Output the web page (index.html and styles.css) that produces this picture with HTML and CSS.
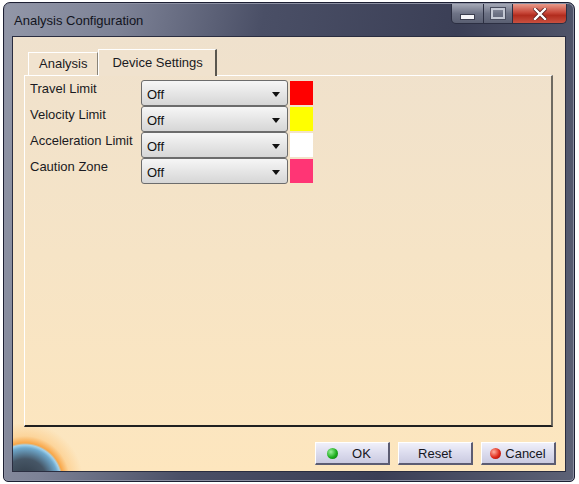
FILE: index.html
```html
<!DOCTYPE html>
<html lang="en">
<head>
    <meta charset="UTF-8">
    <meta name="viewport" content="width=device-width, initial-scale=1.0">
    <title>Analysis Configuration</title>
    <link rel="stylesheet" href="styles.css">
</head>
<body>
    <div class="window">
        <div class="titlebar">
            <span class="title">Analysis Configuration</span>
            <div class="caption-buttons">
                <div class="cap cap-min"><span class="min-bar"></span></div>
                <div class="cap cap-max"><span class="max-box"></span></div>
                <div class="cap cap-close">
                    <svg width="14" height="12" viewBox="0 0 14 12">
                        <path d="M2 1 L12 11 M12 1 L2 11" stroke="#5a2020" stroke-width="4" stroke-linecap="square"/>
                        <path d="M2 1 L12 11 M12 1 L2 11" stroke="#ffffff" stroke-width="2.4" stroke-linecap="square"/>
                    </svg>
                </div>
            </div>
        </div>
        <div class="client">
            <div class="tabs">
                <div class="tab">Analysis</div>
                <div class="tab active">Device Settings</div>
            </div>
            <div class="panel">
                <div class="settings">
                    <div class="label">Travel Limit</div>
                    <div class="combo"><span>Off</span><span class="arrow"></span></div>
                    <div class="swatch red"></div>

                    <div class="label">Velocity Limit</div>
                    <div class="combo"><span>Off</span><span class="arrow"></span></div>
                    <div class="swatch yellow"></div>

                    <div class="label">Acceleration Limit</div>
                    <div class="combo"><span>Off</span><span class="arrow"></span></div>
                    <div class="swatch white"></div>

                    <div class="label">Caution Zone</div>
                    <div class="combo"><span>Off</span><span class="arrow"></span></div>
                    <div class="swatch pink"></div>
                </div>
            </div>
            <div class="actions">
                <button class="btn"><span class="dot green"></span>OK</button>
                <button class="btn">Reset</button>
                <button class="btn"><span class="dot redball"></span>Cancel</button>
            </div>
        </div>
    </div>
</body>
</html>
```

FILE: styles.css
```css
body {
    margin: 0;
    background-color: #ffffff;
    font-family: "Liberation Sans", Arial, sans-serif;
}
.window {
    width: 572px;
    height: 480px;
    margin: 2px 0 0 3px;
    box-sizing: border-box;
    border: 1px solid #1c1f33;
    border-radius: 7px 7px 5px 5px;
    background: linear-gradient(100deg, #9297a8 0%, #7d8296 18%, #4a4f66 40%, #3b3f56 70%, #5d6276 100%);
    padding: 0 8px 9px 8px;
    display: flex;
    flex-direction: column;
    box-shadow: inset 0 0 0 1px #8c90a2;
}
.titlebar {
    height: 33px;
    display: flex;
    justify-content: space-between;
    align-items: flex-start;
}
.title {
    margin: 10px 0 0 2px;
    font-size: 13px;
    color: #121420;
}
.caption-buttons {
    display: flex;
    margin-top: 1px;
    margin-right: -1px;
}
.cap {
    height: 20px;
    border: 1px solid #2c2f42;
    border-top: none;
    box-sizing: border-box;
    display: flex;
    align-items: center;
    justify-content: center;
}
.cap-min {
    width: 33px;
    border-radius: 0 0 0 5px;
    background: linear-gradient(#a4a8b6, #6e7386 50%, #5a5f72);
}
.cap-max {
    width: 29px;
    border-left: none;
    background: linear-gradient(#a4a8b6, #6e7386 50%, #5a5f72);
}
.cap-close {
    width: 54px;
    border-left: none;
    border-radius: 0 0 5px 0;
    background: linear-gradient(#e89a8a, #c8483a 45%, #b22c1e 60%, #c85040);
}
.min-bar {
    width: 13px;
    height: 4px;
    margin-top: 6px;
    background: #f4f4f8;
    border: 1px solid #3a3d4e;
}
.max-box {
    width: 10px;
    height: 7px;
    border: 2px solid #c4c8d4;
    outline: 1px solid #4a4e60;
}
.client {
    flex: 1;
    border: 1px solid #2a2d40;
    background:
        radial-gradient(circle at 12px 444px, #2e3844 0, #465666 22px, #6ea8cc 33px, #a2d2ec 36px, rgba(248, 160, 60, 0.9) 38px, rgba(252, 196, 120, 0.5) 45px, rgba(253, 229, 190, 0) 58px),
        linear-gradient(#efe1cd, #f6e4c6 50%, #fde6be);
    padding: 11px 12px 0 11px;
    display: flex;
    flex-direction: column;
}
.tabs {
    display: flex;
    align-items: flex-end;
    padding-left: 4px;
    height: 27px;
}
.tab {
    height: 23px;
    padding: 0 10px;
    font-size: 13px;
    color: #1a1a22;
    line-height: 22px;
    border: 1px solid #ffffff;
    border-right: 1px solid #8a8478;
    border-bottom: none;
    background-color: #f1e3cf;
    box-sizing: border-box;
}
.tab.active {
    height: 27px;
    padding: 0 12px 0 13px;
    line-height: 26px;
    border-right: 2px solid #5a564e;
    margin-bottom: -1px;
    position: relative;
    z-index: 1;
    background-color: #f0e2ce;
}
.panel {
    height: 352px;
    box-sizing: border-box;
    border-top: 1px solid #ffffff;
    border-left: 1px solid #ffffff;
    border-right: 2px solid #6e6a62;
    border-bottom: 2px solid #202020;
    padding: 4px 0 0 5px;
}
.settings {
    display: grid;
    grid-template-columns: 109px 147px 23px;
    column-gap: 2px;
    grid-auto-rows: 26px;
}
.label {
    font-size: 13px;
    color: #1a1a22;
    padding-top: 1px;
    white-space: nowrap;
}
.combo {
    box-sizing: border-box;
    height: 26px;
    border: 1px solid #6c6c6c;
    border-radius: 3px;
    background: linear-gradient(#f6f6f6, #e6e6e6 50%, #d6d6d6);
    display: flex;
    justify-content: space-between;
    align-items: center;
    padding: 3px 7px 0 5px;
    font-size: 13px;
    color: #111111;
}
.arrow {
    width: 0;
    height: 0;
    border-left: 4px solid transparent;
    border-right: 4px solid transparent;
    border-top: 5px solid #111111;
}
.swatch {
    height: 24px;
    margin-top: 1px;
}
.swatch.red { background-color: #ff0000; }
.swatch.yellow { background-color: #ffff00; }
.swatch.white { background-color: #ffffff; }
.swatch.pink { background-color: #ff3575; }
.actions {
    display: flex;
    justify-content: flex-end;
    gap: 8px;
    margin-top: 15px;
    margin-right: -3px;
}
.btn {
    width: 75px;
    height: 23px;
    box-sizing: border-box;
    border-top: 1px solid #ffffff;
    border-left: 1px solid #ffffff;
    border-right: 2px solid #5c5c72;
    border-bottom: 2px solid #5c5c72;
    background: linear-gradient(#f0f0fa, #dcdcee 50%, #cacae0);
    font-family: "Liberation Sans", Arial, sans-serif;
    font-size: 13px;
    color: #161622;
    display: flex;
    align-items: center;
    justify-content: center;
    gap: 10px;
    padding: 0 4px;
}
.dot {
    width: 11px;
    height: 11px;
    border-radius: 50%;
}
.dot.green {
    background: radial-gradient(circle at 35% 35%, #9cf09c, #1eae1e 55%, #0a6a0a);
    margin-left: -6px;
    margin-right: 4px;
}
.dot.redball {
    background: radial-gradient(circle at 35% 35%, #ffb0a0, #e02a1a 55%, #8a0a0a);
    margin-right: -6px;
}
```
